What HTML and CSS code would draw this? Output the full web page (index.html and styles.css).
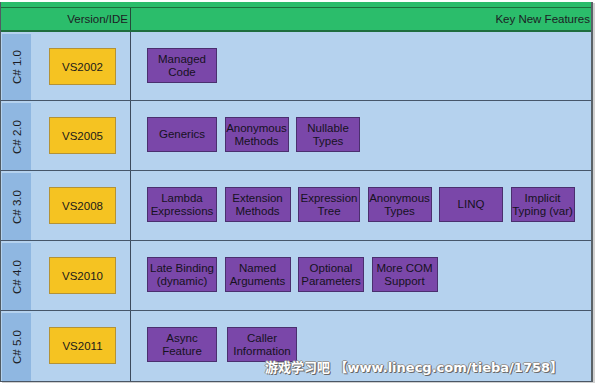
FILE: index.html
```html
<!DOCTYPE html>
<html>
<head>
<meta charset="utf-8">
<link rel="stylesheet" href="styles.css">
</head>
<body>
<div class="page">
  <div class="table">
    <div class="strip"></div>
    <div class="header">
      <div class="hcell hver">Version/IDE</div>
      <div class="hcell hfeat">Key New Features</div>
    </div>

    <div class="row first">
      <div class="label"><span>C# 1.0</span></div>
      <div class="ver"><div class="ide">VS2002</div></div>
      <div class="feats">
        <div class="box w70">Managed<br>Code</div>
      </div>
    </div>

    <div class="row">
      <div class="label"><span>C# 2.0</span></div>
      <div class="ver"><div class="ide">VS2005</div></div>
      <div class="feats">
        <div class="box w70">Generics</div>
        <div class="box w64">Anonymous<br>Methods</div>
        <div class="box w64">Nullable<br>Types</div>
      </div>
    </div>

    <div class="row">
      <div class="label"><span>C# 3.0</span></div>
      <div class="ver"><div class="ide">VS2008</div></div>
      <div class="feats">
        <div class="box w70">Lambda<br>Expressions</div>
        <div class="box w66">Extension<br>Methods</div>
        <div class="box w62">Expression<br>Tree</div>
        <div class="box w64">Anonymous<br>Types</div>
        <div class="box w64">LINQ</div>
        <div class="box w64">Implicit<br>Typing (var)</div>
      </div>
    </div>

    <div class="row">
      <div class="label"><span>C# 4.0</span></div>
      <div class="ver"><div class="ide">VS2010</div></div>
      <div class="feats">
        <div class="box w70">Late Binding<br>(dynamic)</div>
        <div class="box w66">Named<br>Arguments</div>
        <div class="box w66">Optional<br>Parameters</div>
        <div class="box w66">More COM<br>Support</div>
      </div>
    </div>

    <div class="row">
      <div class="label"><span>C# 5.0</span></div>
      <div class="ver"><div class="ide">VS2011</div></div>
      <div class="feats wide">
        <div class="box w70">Async<br>Feature</div>
        <div class="box w70">Caller<br>Information</div>
      </div>
    </div>
  </div>
  <div class="watermark">游戏学习吧 【www.linecg.com/tieba/1758】</div>
</div>
</body>
</html>
```
FILE: styles.css
```css
* { box-sizing: border-box; }
html, body { margin: 0; padding: 0; background: #ffffff; }
.page {
  position: relative;
  width: 596px;
  height: 383px;
  padding-top: 2px;
  font-family: "Liberation Sans", Arial, sans-serif;
  color: #1c1c24;
}
.table {
  width: 593px;
  border-left: 1px solid #505a62;
  border-right: 2px solid #5a6268;
  border-bottom: 1px solid #4a5664;
  background: #b5d2ee;
  box-shadow: 2px 1px 0 #d0d0d0;
}
.strip { height: 5px; background: #2bbd6b; }
.header {
  display: grid;
  grid-template-columns: 130px 1fr;
  height: 25px;
  background: #2bbd6b;
  border-top: 1px solid #1f6e3e;
  border-bottom: 2px solid #1f6e3e;
  font-size: 11.5px;
}
.hcell {
  display: flex;
  align-items: center;
  justify-content: flex-end;
  padding-right: 2px;
}
.hver { border-right: 1px solid #254a3a; }
.hfeat { padding-right: 1px; }

.row {
  display: grid;
  grid-template-columns: 30px 100px 1fr;
  height: 70px;
  border-bottom: 1px solid #46566a;
}
.row.first { height: 69px; }
.row:last-child { border-bottom: none; height: 70px; }
.label {
  margin: 2px 0 0 1px;
  background: #8fb7e1;
  display: flex;
  align-items: center;
  justify-content: center;
  font-size: 11.5px;
}
.label span {
  display: block;
  transform: rotate(-90deg);
  white-space: nowrap;
}
.ver {
  border-right: 1px solid #3c4a5c;
  padding: 16px 0 0 18px;
}
.ide {
  width: 67px;
  height: 37px;
  background: #f5c322;
  border: 1px solid #b39236;
  display: flex;
  align-items: center;
  justify-content: center;
  font-size: 11.5px;
  color: #1a1a1a;
}
.feats {
  display: flex;
  align-items: flex-start;
  gap: 7.5px;
  padding: 16px 0 0 16px;
}
.feats.wide { gap: 10px; }
.box {
  height: 35px;
  background: #7a47a9;
  border: 1px solid #4a2f6e;
  display: flex;
  align-items: center;
  justify-content: center;
  text-align: center;
  font-size: 11.5px;
  line-height: 13px;
  color: #16121e;
}
.w62 { width: 62px; }
.w64 { width: 64px; }
.w66 { width: 66px; }
.w70 { width: 70px; }

.watermark {
  position: absolute;
  left: 265px;
  top: 357px;
  font-family: "DejaVu Sans", "Noto Sans CJK SC", sans-serif;
  font-weight: bold;
  font-size: 13px;
  letter-spacing: 0;
  color: #ffffff;
  text-shadow: 1px 1px 0 #6a6a6a, -1px 0 0 #8a8a8a, 0 -1px 0 #9a9a9a, 1px 0 0 #7a7a7a;
  white-space: nowrap;
}
```
